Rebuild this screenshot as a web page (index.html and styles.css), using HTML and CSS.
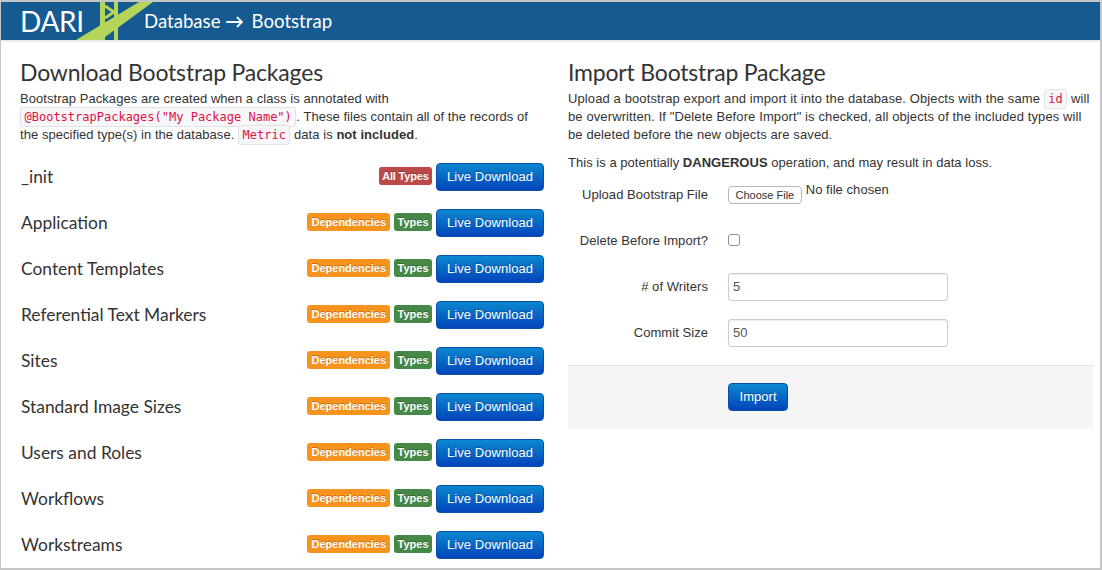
FILE: index.html
```html
<!DOCTYPE html>
<html lang="en">
<head>
<meta charset="utf-8">
<title>Database → Bootstrap</title>
<link rel="stylesheet" href="styles.css">
</head>
<body>
<div class="frame">
  <header class="topbar">
    <span class="brand">DARI</span>
    <svg class="mark" width="90" height="38" viewBox="0 0 90 38" aria-hidden="true">
      <path d="M25 0h5v38h-5zM39 0h4v38h-4z" fill="#b5d55a"/>
      <path d="M30 4l9 6M30 16l9-6" stroke="#b5d55a" stroke-width="3" fill="none"/>
      <polygon points="1,38 64,0 78,0 26,38" fill="#b5d55a"/>
    </svg>
    <span class="crumb">Database <span class="arrow">→</span> Bootstrap</span>
  </header>
  <main class="columns">
    <section class="col">
      <h2>Download Bootstrap Packages</h2>
      <p class="intro">Bootstrap Packages are created when a class is annotated with <code>@BootstrapPackages("My Package Name")</code>. These files contain all of the records of the specified type(s) in the database. <code>Metric</code> data is <strong>not included</strong>.</p>
      <ul class="packages">
        <li><span class="name">_init</span><span class="tag red">All Types</span><a class="btn">Live Download</a></li>
        <li><span class="name">Application</span><span class="tag orange">Dependencies</span><span class="tag green">Types</span><a class="btn">Live Download</a></li>
        <li><span class="name">Content Templates</span><span class="tag orange">Dependencies</span><span class="tag green">Types</span><a class="btn">Live Download</a></li>
        <li><span class="name">Referential Text Markers</span><span class="tag orange">Dependencies</span><span class="tag green">Types</span><a class="btn">Live Download</a></li>
        <li><span class="name">Sites</span><span class="tag orange">Dependencies</span><span class="tag green">Types</span><a class="btn">Live Download</a></li>
        <li><span class="name">Standard Image Sizes</span><span class="tag orange">Dependencies</span><span class="tag green">Types</span><a class="btn">Live Download</a></li>
        <li><span class="name">Users and Roles</span><span class="tag orange">Dependencies</span><span class="tag green">Types</span><a class="btn">Live Download</a></li>
        <li><span class="name">Workflows</span><span class="tag orange">Dependencies</span><span class="tag green">Types</span><a class="btn">Live Download</a></li>
        <li><span class="name">Workstreams</span><span class="tag orange">Dependencies</span><span class="tag green">Types</span><a class="btn">Live Download</a></li>
      </ul>
    </section>
    <section class="col">
      <h2>Import Bootstrap Package</h2>
      <p class="intro intro-wide">Upload a bootstrap export and import it into the database. Objects with the same <code>id</code> will be overwritten. If "Delete Before Import" is checked, all objects of the included types will be deleted before the new objects are saved.</p>
      <p class="warn">This is a potentially <strong>DANGEROUS</strong> operation, and may result in data loss.</p>
      <form class="form">
        <div class="field"><label>Upload Bootstrap File</label><div class="file"><span class="choose">Choose File</span><span class="nofile">No file chosen</span></div></div>
        <div class="field"><label>Delete Before Import?</label><span class="check"></span></div>
        <div class="field"><label># of Writers</label><span class="input">5</span></div>
        <div class="field"><label>Commit Size</label><span class="input">50</span></div>
        <div class="actions"><a class="btn">Import</a></div>
      </form>
    </section>
  </main>
</div>
</body>
</html>
```
FILE: styles.css
```css
* { box-sizing: border-box; }
html, body { margin: 0; padding: 0; }
body {
  width: 1102px;
  height: 570px;
  overflow: hidden;
  background: #fff;
  color: #333;
  font-family: "Liberation Sans", Arial, sans-serif;
  font-size: 13px;
  line-height: 18px;
  letter-spacing: .05px;
}
.frame {
  width: 1102px;
  height: 570px;
  border: 1px solid #c6c6c6;
  border-width: 2px 2px 2px 1px;
  overflow: hidden;
}
.topbar {
  position: relative;
  height: 38px;
  background: #155a90;
  color: #fff;
  display: flex;
  align-items: center;
  box-shadow: 0 1px 2px rgba(0,0,0,.15);
  overflow: hidden;
}
.brand {
  font-family: Lato, sans-serif;
  font-size: 28px;
  margin-left: 19px;
  width: 124px;
  letter-spacing: -.3px;
}
.mark { position: absolute; left: 74px; top: 0; }
.crumb {
  position: relative;
  font-family: Lato, sans-serif;
  font-size: 18.6px;
  letter-spacing: 0;
}
.arrow { font-weight: 700; margin-right: 3px; }
.columns {
  display: grid;
  grid-template-columns: 524px 525px;
  gap: 24px;
  padding: 0 0 0 19px;
}
h2 {
  margin: 19px 0 0;
  font-family: Lato, sans-serif;
  font-weight: 400;
  font-size: 23px;
  line-height: 26px;
  letter-spacing: -.19px;
  color: #333;
}
.intro { margin: 5px 0 0; }
.intro-wide { letter-spacing: .11px; }
.warn { margin: 10px 0 0; letter-spacing: .03px; }
code {
  font-family: "DejaVu Sans Mono", monospace;
  font-size: 12px;
  letter-spacing: 0;
  color: #d14;
  background: #f7f7f9;
  border: 1px solid #e1e1e8;
  border-radius: 3px;
  padding: 2px 3.5px;
}
.packages {
  list-style: none;
  margin: 19px 0 0;
  padding: 0;
}
.packages li {
  height: 28px;
  margin-bottom: 18px;
  display: flex;
  align-items: center;
  gap: 4px;
}
.name {
  margin-right: auto;
  margin-left: 1px;
  font-family: Lato, sans-serif;
  font-size: 17.4px;
  letter-spacing: 0;
}
.tag {
  height: 18px;
  line-height: 18px;
  margin-bottom: 2px;
  padding: 0 4px;
  border-radius: 3px;
  color: #fff;
  font-weight: 700;
  font-size: 11px;
  letter-spacing: 0;
  text-shadow: 0 -1px 0 rgba(0,0,0,.25);
}
.red { background: #b94a48; padding: 0 3.5px; letter-spacing: -.2px; }
.orange { background: #f8941d; }
.green { background: #468847; padding: 0 3.5px; }
.btn {
  display: inline-block;
  height: 28px;
  line-height: 26px;
  padding: 0 10px;
  border: 1px solid #0a4ea8;
  border-radius: 4px;
  color: #fff;
  font-size: 13px;
  background: linear-gradient(#0b88cf, #0344bb);
  text-shadow: 0 -1px 0 rgba(0,0,0,.25);
}
.form { margin-top: 9px; }
.field {
  display: flex;
  align-items: center;
  height: 28px;
  margin-bottom: 18px;
}
.field label {
  width: 140px;
  text-align: right;
}
.file {
  margin-left: 20px;
  display: flex;
  align-items: flex-start;
  gap: 4px;
}
.choose {
  display: inline-block;
  height: 18px;
  line-height: 16px;
  padding: 0 6.5px;
  border: 1px solid #b8b8b8;
  border-radius: 4px;
  font-size: 11px;
  letter-spacing: 0;
  background: #fff;
}
.nofile { margin-top: -5px; }
.check {
  margin: 0 0 2px 20px;
  width: 12px;
  height: 12px;
  border: 1px solid #8e8e8e;
  border-radius: 3px;
  background: #fff;
}
.input {
  margin-left: 20px;
  width: 220px;
  height: 28px;
  line-height: 26px;
  padding: 0 4px;
  border: 1px solid #ccc;
  border-radius: 3px;
  color: #555;
  box-shadow: inset 0 1px 1px rgba(0,0,0,.075);
}
.actions {
  height: 64px;
  padding: 17px 0 0 160px;
  background: #f5f5f5;
  border-top: 1px solid #e5e5e5;
}
.actions .btn { padding: 0 10.5px; }
```
